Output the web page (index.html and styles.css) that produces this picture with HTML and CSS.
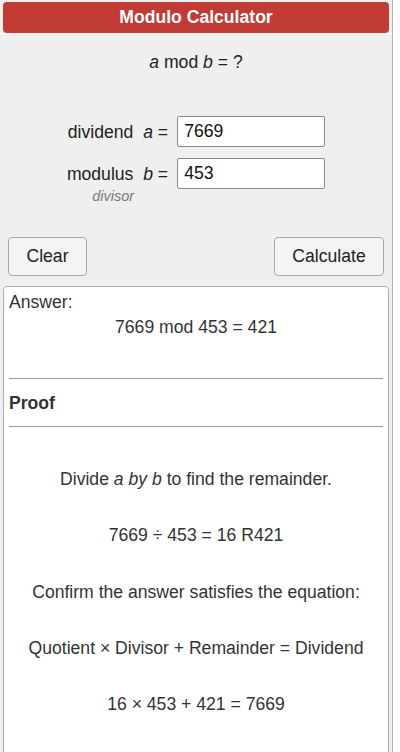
FILE: index.html
```html
<!DOCTYPE html>
<html>
<head>
<meta charset="utf-8">
<link rel="stylesheet" href="styles.css">
</head>
<body>
<div class="calc">
  <div class="header">Modulo Calculator</div>
  <div class="formula"><i>a</i> mod <i>b</i> = ?</div>
  <div class="fields">
    <div class="label">dividend&nbsp; <i>a</i> =</div>
    <input class="field" type="text" value="7669">
    <div class="label">modulus&nbsp; <i>b</i> =</div>
    <input class="field" type="text" value="453">
    <div class="sub">divisor</div>
  </div>
  <div class="buttons">
    <button class="btn btn-clear">Clear</button>
    <button class="btn btn-calc">Calculate</button>
  </div>
  <div class="answer">
    <div class="answer-label">Answer:</div>
    <div class="answer-result">7669 mod 453 = 421</div>
    <hr class="rule rule-top">
    <div class="proof-title">Proof</div>
    <hr class="rule">
    <div class="proof">
      <p>Divide <i>a by b</i> to find the remainder.</p>
      <p>7669 ÷ 453 = 16 R421</p>
      <p>Confirm the answer satisfies the equation:</p>
      <p>Quotient × Divisor + Remainder = Dividend</p>
      <p>16 × 453 + 421 = 7669</p>
    </div>
  </div>
</div>
</body>
</html>
```

FILE: styles.css
```css
html, body {
  margin: 0;
  padding: 0;
  background: #ffffff;
}
body {
  font-family: "Liberation Sans", Arial, sans-serif;
  font-size: 17.6px;
  color: #222;
}
.calc {
  width: 386px;
  padding: 2px 3px 0 3px;
  background: #efefef;
  border-right: 1px solid #b4b4b4;
  min-height: 750px;
}
.header {
  background: #c03b33;
  color: #fff;
  font-weight: bold;
  text-align: center;
  height: 31px;
  line-height: 31px;
  border-radius: 4px;
}
.formula {
  text-align: center;
  line-height: 20px;
  margin-top: 19px;
}
.fields {
  display: grid;
  grid-template-columns: auto 148px;
  column-gap: 9px;
  row-gap: 11px;
  justify-content: center;
  align-items: center;
  margin-top: 44px;
}
.label {
  text-align: right;
  line-height: 20px;
}
.field {
  box-sizing: border-box;
  width: 148px;
  height: 31px;
  border: 1px solid #8a8a8a;
  border-radius: 2px;
  background: #fff;
  font-family: "Liberation Sans", Arial, sans-serif;
  font-size: 17.6px;
  color: #111;
  padding: 0 6px;
  margin: 0;
}
.sub {
  grid-column: 1;
  margin-top: -12px;
  text-align: right;
  padding-right: 34px;
  font-size: 14.5px;
  font-style: italic;
  color: #777;
  line-height: 16px;
}
.buttons {
  display: flex;
  justify-content: space-between;
  padding: 0 5px;
  margin-top: 33px;
}
.btn {
  height: 39px;
  background: #f4f4f4;
  border: 1px solid #a8a8a8;
  border-radius: 4px;
  font-family: "Liberation Sans", Arial, sans-serif;
  font-size: 17.6px;
  color: #222;
  padding: 0;
}
.btn-clear { width: 79px; }
.btn-calc { width: 110px; }
.answer {
  margin-top: 10px;
  background: #fff;
  border: 1px solid #b0b0b0;
  border-radius: 4px;
  height: 464px;
  padding: 5px 5px 0 5px;
  color: #333;
}
.answer-label {
  line-height: 20px;
}
.answer-result {
  text-align: center;
  line-height: 20px;
  margin-top: 5px;
}
.rule {
  border: 0;
  border-top: 1px solid #999;
  margin: 0;
  height: 0;
}
.rule-top {
  margin-top: 41px;
}
.proof-title {
  font-weight: bold;
  line-height: 20px;
  margin: 14px 0 13px 0;
}
.proof {
  text-align: center;
  padding-top: 42px;
}
.proof p {
  margin: 0 0 36.3px 0;
  line-height: 20px;
}
```
